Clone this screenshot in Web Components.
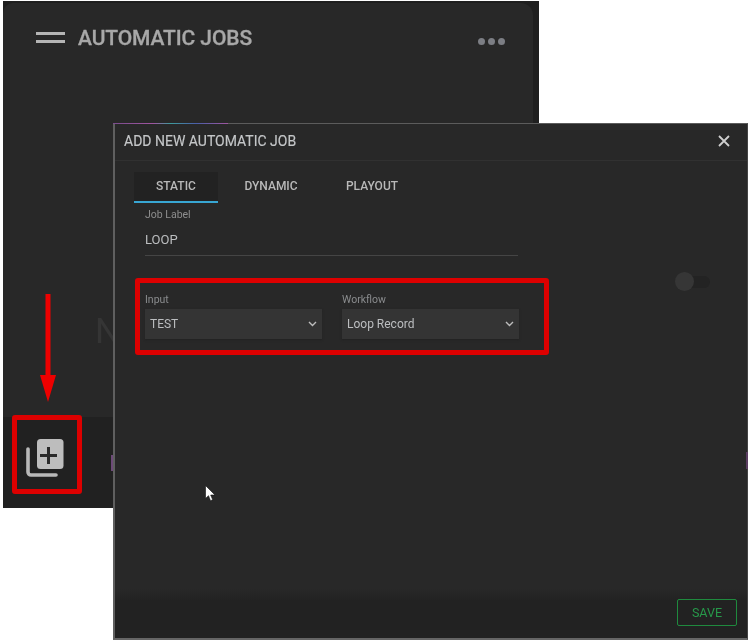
<!DOCTYPE html>
<html lang="en">
<head>
<meta charset="utf-8">
<title>Automatic Jobs</title>
<style>
  html, body { margin: 0; background: #fff; }
  body { font-family: Roboto, "Liberation Sans", sans-serif; overflow: hidden; }
  #desk { position: relative; width: 750px; height: 641px; overflow: hidden; filter: blur(0.4px); }
  jobs-panel { position: absolute; left: 3px; top: 1px; width: 536px; height: 507px; }
  job-modal { position: absolute; left: 113px; top: 123px; width: 635px; height: 517px; }
  red-box.fields { position: absolute; left: 135px; top: 278px; width: 414px; height: 77px; }
  red-box.add { position: absolute; left: 12px; top: 415px; width: 70px; height: 79px; }
  red-arrow { position: absolute; left: 40px; top: 294px; }
  mouse-cursor { position: absolute; left: 205px; top: 485px; }
</style>
</head>
<body>
<div id="desk">
  <jobs-panel title-text="AUTOMATIC JOBS"></jobs-panel>
  <job-modal title-text="ADD NEW AUTOMATIC JOB">
    <job-tabs active="STATIC" tabs="STATIC,DYNAMIC,PLAYOUT"></job-tabs>
    <text-field label="Job Label" value="LOOP"></text-field>
    <select-row>
      <select-field label="Input" value="TEST"></select-field>
      <select-field label="Workflow" value="Loop Record"></select-field>
    </select-row>
    <off-toggle></off-toggle>
  </job-modal>
  <red-arrow></red-arrow>
  <red-box class="fields"></red-box>
  <red-box class="add"></red-box>
  <mouse-cursor></mouse-cursor>
</div>

<script>
const panelTemplate = document.createElement('template');
panelTemplate.innerHTML = `<style>
  :host { display: block; background: #1f1f1f; box-sizing: border-box; }
  .frame { display: flex; flex-direction: column; height: 100%; }
  .main { flex: 1; background: #282828; border-radius: 10px 12px 0 0; margin: 2px 6px 0 0; display: flex; flex-direction: column; }
  header { display: flex; align-items: center; box-sizing: border-box; height: 64px; padding: 4px 28px 0 33px; }
  .burger { width: 29px; border-top: 3px solid #b5b5b5; border-bottom: 3px solid #b5b5b5; box-sizing: border-box; height: 11px; margin-right: 13px; }
  h1 { margin: 0; padding-top: 2px; flex: 1; font: 500 21px Roboto, sans-serif; letter-spacing: -0.1px; color: #a8a8a8; -webkit-text-stroke: 0.3px #a8a8a8; }
  .dots { display: flex; gap: 3px; margin-top: 8px; }
  .dots i { width: 7px; height: 7px; border-radius: 50%; background: #7c7e84; }
  .ghost { margin: 245px 0 0 92px; font: 400 35px Roboto, sans-serif; color: #353535; line-height: 40px; }
  footer { box-sizing: border-box; height: 91px; background: #212121; display: flex; align-items: center; padding: 0 0 10px 23px; }
  svg { display: block; }
  .sliver { width: 2px; height: 16px; margin: 10px 0 0 47px; background: #6d4a78; }
</style>
<div class="frame">
  <div class="main">
    <header>
      <div class="burger"></div>
      <h1></h1>
      <div class="dots"><i></i><i></i><i></i></div>
    </header>
    <div class="ghost">N</div>
  </div>
  <footer>
    <svg width="38" height="38" viewBox="0 0 38 38">
      <path d="M2 10v23a3 3 0 0 0 3 3h25" fill="none" stroke="#b9b9b9" stroke-width="3.600" stroke-linecap="round"/>
      <rect x="11" y="0" width="26.500" height="30" rx="3.500" fill="#bdbdbd"/>
      <path d="M22.500 8v17M14 16.500h17" stroke="#2a2a2a" stroke-width="3"/>
    </svg>
    <div class="sliver"></div>
  </footer>
</div>`;

class JobsPanel extends HTMLElement {
  constructor() {
    super();
    this._root = this.attachShadow({mode: 'open'});
    this._root.appendChild(panelTemplate.content.cloneNode(true));
  }
  connectedCallback() {
    this._root.querySelector('h1').textContent = this.getAttribute('title-text');
  }
}

const modalTemplate = document.createElement('template');
modalTemplate.innerHTML = `<style>
  :host { display: block; box-sizing: border-box; background: #282828; color: #c8c8c8;
    border-top: 1px solid #5c5c5c; border-left: 2px solid #5f5f5f; border-right: 1px solid #444; border-bottom: 2px solid #666; }
  .box { position: relative; display: flex; flex-direction: column; height: 100%; box-shadow: inset 0 -2px 0 #1c1c1c; }
  .rainbow { position: absolute; left: -2px; top: -1px; width: 115px; height: 1px;
    background: linear-gradient(90deg, #7a4c8c, #a055a0 35%, #3f9a9c 50%, #4a5fa8 72%, #a055a0 100%); }
  .edge { position: absolute; right: -1px; top: 328px; width: 2px; height: 17px; background: #5a3d60; }
  header { display: flex; align-items: center; justify-content: space-between; box-sizing: border-box; height: 37px; padding: 0 17px 2px 9px; border-bottom: 1px solid #313131; }
  h2 { margin: 0; font: 400 14px Roboto, sans-serif; color: #c4c6c8; -webkit-text-stroke: 0.15px #c4c6c8; }
  .content { flex: 1; padding: 11px 19px; }
  footer { box-sizing: border-box; height: 50px; display: flex; justify-content: flex-end; align-items: center; padding: 0 10px 1px 0;
    background: linear-gradient(#282828, #222 12px); }
  button { width: 60px; height: 27px; background: none; border: 1.5px solid #1f8a3e; border-radius: 2px; color: #27994a; font: 400 12.500px Roboto, sans-serif; padding: 0; }
</style>
<div class="box">
  <div class="rainbow"></div>
  <div class="edge"></div>
  <header>
    <h2></h2>
    <svg width="12" height="12" viewBox="0 0 12 12"><path d="M1 1l10 10M11 1L1 11" stroke="#cfcfcf" stroke-width="1.800"/></svg>
  </header>
  <div class="content"><slot></slot></div>
  <footer><button>SAVE</button></footer>
</div>`;

class JobModal extends HTMLElement {
  constructor() {
    super();
    this._root = this.attachShadow({mode: 'open'});
    this._root.appendChild(modalTemplate.content.cloneNode(true));
  }
  connectedCallback() {
    this._root.querySelector('h2').textContent = this.getAttribute('title-text');
  }
}

class JobTabs extends HTMLElement {
  constructor() {
    super();
    this._root = this.attachShadow({mode: 'open'});
  }
  connectedCallback() {
    const active = this.getAttribute('active');
    let html = `<style>
      :host { display: flex; height: 31px; }
      div { height: 29px; text-align: center; font: 500 12px/28px Roboto, sans-serif; color: #b9b9b9; width: 96px; border-bottom: 2px solid transparent; }
      div:nth-of-type(1) { width: 84px; }
      div:nth-of-type(2) { width: 106px; }
      div.on { background: #222; border-bottom-color: #38a6d3; }
    </style>`;
    this.getAttribute('tabs').split(',').forEach(t => {
      html = html + `<div class="${t === active ? 'on' : ''}">${t}</div>`;
    });
    this._root.innerHTML = html;
  }
}

class TextField extends HTMLElement {
  constructor() {
    super();
    this._root = this.attachShadow({mode: 'open'});
  }
  connectedCallback() {
    this._root.innerHTML = `<style>
      :host { display: block; margin: 5px 0 0 11px; width: 373px; height: 47px; border-bottom: 1px solid #454545; }
      label { display: block; font: 400 10.500px/13px Roboto, sans-serif; color: #8e8e8e; }
      div { font: 400 13px/18px Roboto, sans-serif; color: #bcbec0; margin-top: 10px; }
    </style>
    <label>${this.getAttribute('label')}</label>
    <div>${this.getAttribute('value')}</div>`;
  }
}

const selectRowTemplate = document.createElement('template');
selectRowTemplate.innerHTML = `<style>
  :host { display: grid; grid-template-columns: 177px 177px; column-gap: 20px; margin: 37px 0 0 11px; width: 374px; }
</style><slot></slot>`;

class SelectRow extends HTMLElement {
  constructor() {
    super();
    this.attachShadow({mode: 'open'}).appendChild(selectRowTemplate.content.cloneNode(true));
  }
}

class SelectField extends HTMLElement {
  constructor() {
    super();
    this._root = this.attachShadow({mode: 'open'});
  }
  connectedCallback() {
    this._root.innerHTML = `<style>
      :host { display: block; }
      label { display: block; font: 400 10.500px/13px Roboto, sans-serif; color: #8a8c8e; margin-bottom: 3px; }
      .sel { display: flex; align-items: center; justify-content: space-between; height: 30px; background: #343434; padding: 0 5px; box-sizing: border-box; font: 400 12px Roboto, sans-serif; color: #bcbec0; box-shadow: 0 1px 2px #222; }
      svg { display: block; }
    </style>
    <label>${this.getAttribute('label')}</label>
    <div class="sel"><span>${this.getAttribute('value')}</span>
      <svg width="9" height="6" viewBox="0 0 9 6"><path d="M1 1l3.500 3.500L8 1" fill="none" stroke="#bdbdbd" stroke-width="1.400"/></svg>
    </div>`;
  }
}

const toggleTemplate = document.createElement('template');
toggleTemplate.innerHTML = `<style>
  :host { position: absolute; left: 560px; top: 148px; display: flex; align-items: center; width: 35px; height: 19px; }
  .track { position: absolute; left: 8px; right: 0; height: 12px; border-radius: 6px; background: #232323; }
  .knob { position: relative; width: 19px; height: 19px; border-radius: 50%; background: #363636; }
</style><div class="track"></div><div class="knob"></div>`;

class OffToggle extends HTMLElement {
  constructor() {
    super();
    this.attachShadow({mode: 'open'}).appendChild(toggleTemplate.content.cloneNode(true));
  }
}

class RedBox extends HTMLElement {
  constructor() {
    super();
    this.attachShadow({mode: 'open'}).innerHTML = `<style>
      :host { display: block; box-sizing: border-box; border: 5px solid #dd0000; border-radius: 3px; }
    </style>`;
  }
}

class RedArrow extends HTMLElement {
  constructor() {
    super();
    this.attachShadow({mode: 'open'}).innerHTML = `<style>
      :host { display: block; width: 16px; height: 108px; }
      svg { display: block; }
    </style>
    <svg width="16" height="108" viewBox="0 0 16 108"><path d="M5.500 0h5v81h5.500L8 108 0 81h5.500z" fill="#ee0000"/></svg>`;
  }
}

class MouseCursor extends HTMLElement {
  constructor() {
    super();
    this.attachShadow({mode: 'open'}).innerHTML = `<style>
      :host { display: block; width: 12px; height: 17px; }
      svg { display: block; }
    </style>
    <svg width="12" height="17" viewBox="0 0 12 17"><path d="M0.500 0.500v13l3-2.800 2 5 2.200-.9-2-4.800h4.300z" fill="#fff" stroke="#111" stroke-width="0.600"/></svg>`;
  }
}

customElements.define('jobs-panel', JobsPanel);
customElements.define('job-modal', JobModal);
customElements.define('job-tabs', JobTabs);
customElements.define('text-field', TextField);
customElements.define('select-row', SelectRow);
customElements.define('select-field', SelectField);
customElements.define('off-toggle', OffToggle);
customElements.define('red-box', RedBox);
customElements.define('red-arrow', RedArrow);
customElements.define('mouse-cursor', MouseCursor);
</script>
</body>
</html>
